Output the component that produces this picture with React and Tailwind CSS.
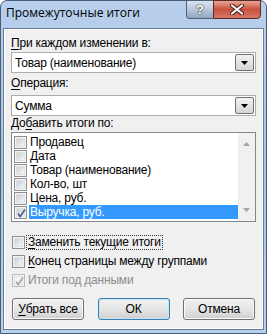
import React from "react";

const F = { fontFamily: "'Liberation Sans', Arial, sans-serif" };

function U({ children }) {
  return <span className="underline underline-offset-[2px]">{children}</span>;
}

function Check({ checked, disabled }) {
  return (
    <div
      className={`relative w-[13px] h-[13px] shrink-0 border ${
        disabled ? "border-[#bcbcbc]" : "border-[#8e8f8f]"
      } bg-[#f4f4f4] flex items-center justify-center`}
    >
      <div
        className={`w-[9px] h-[9px] ${
          disabled ? "bg-[#f4f4f4]" : "bg-gradient-to-br from-[#cbcfd5] to-[#f6f6f6]"
        } border border-[#e0e0e0]`}
      />
      {checked && (
        <svg className="absolute left-[1px] top-[1px]" width="11" height="11" viewBox="0 0 11 11">
          <path
            d="M2 5.5 L4.2 8.5 L9 1.5"
            fill="none"
            stroke={disabled ? "#a8a8a8" : "#4a5f97"}
            strokeWidth="1.6"
          />
        </svg>
      )}
    </div>
  );
}

function Combo({ value }) {
  return (
    <div className="h-[21px] border border-[#abadb3] bg-white flex items-stretch">
      <div className="flex-1 pl-[3px] flex items-center text-[12px] tracking-[-0.2px] text-black leading-none">{value}</div>
      <div className="w-[19px] m-[1px] border border-[#707070] rounded-[2px] bg-gradient-to-b from-[#f2f2f2] to-[#d4d4d4] flex items-center justify-center">
        <svg width="7" height="4" viewBox="0 0 7 4">
          <path d="M0 0 H7 L3.5 4 Z" fill="#000" />
        </svg>
      </div>
    </div>
  );
}

function Btn({ children, def }) {
  return (
    <div
      className={`w-[72px] h-[22px] rounded-[3px] border ${
        def ? "border-[#3c7fb1] shadow-[inset_0_0_0_1px_#bfe6f9]" : "border-[#707070] shadow-[inset_0_0_0_1px_#fbfbfb]"
      } bg-gradient-to-b from-[#f2f2f2] via-[#e6e6e6] to-[#cfcfcf] flex items-center justify-center text-[12px] tracking-[-0.2px] text-black leading-none`}
    >
      {children}
    </div>
  );
}

export default function App() {
  const items = ["Продавец", "Дата", "Товар (наименование)", "Кол-во, шт", "Цена, руб.", "Выручка, руб."];
  return (
    <div className="w-[270px] h-[335px] bg-white overflow-hidden relative" style={F}>
      <div className="w-[267px] h-[334px] rounded-t-[7px] border border-[#4a5d78] bg-gradient-to-b from-[#b7cfec] via-[#a8c4e6] to-[#b9d1ec] flex flex-col">
        <div className="h-[27px] flex items-start justify-between shrink-0">
          <div
            className="pl-[5px] pt-[6px] text-[12px] text-black leading-none"
            style={{ fontFamily: "'Open Sans', 'Noto Sans', sans-serif" }}
          >
            Промежуточные итоги
          </div>
          <div className="flex mr-[5px] -mt-[1px]">
            <div className="w-[27px] h-[19px] rounded-bl-[4px] border border-[#4e5f79] border-r-0 bg-gradient-to-b from-[#d9e4f1] via-[#b8c8dc] to-[#93a7c2] flex items-center justify-center">
              <span className="text-[13px] font-bold text-white leading-none" style={{ textShadow: "0 0 2px #333, 0 0 1px #222" }}>?</span>
            </div>
            <div className="w-[48px] h-[19px] rounded-br-[4px] border border-[#5a2a26] bg-gradient-to-b from-[#e8a596] via-[#c9503e] to-[#d5776a] flex items-center justify-center">
              <svg width="14" height="11" viewBox="0 0 14 11">
                <path d="M2 1.5 L12 9.5 M12 1.5 L2 9.5" stroke="#3a1a18" strokeWidth="4" strokeLinecap="round" />
                <path d="M2 1.5 L12 9.5 M12 1.5 L2 9.5" stroke="#fff" strokeWidth="2.2" strokeLinecap="round" />
              </svg>
            </div>
          </div>
        </div>
        <div className="mx-[2px] h-[302px] border border-[#6b7d95] shadow-[inset_0_0_0_1px_#ffffff] bg-[#f0f0f0] flex flex-col px-[7px] pt-[8px] text-[12px] tracking-[-0.2px] text-black">
          <div className="h-[13px] leading-[13px]"><U>П</U>ри каждом изменении в:</div>
          <div className="mt-[2px]"><Combo value="Товар (наименование)" /></div>
          <div className="mt-[4px] h-[13px] leading-[13px]"><U>О</U>перация:</div>
          <div className="mt-[5px]"><Combo value="Сумма" /></div>
          <div className="mt-[1px] h-[13px] leading-[13px]">До<U>б</U>авить итоги по:</div>
          <div className="mt-[2px] h-[90px] border border-[#828790] bg-white flex">
            <div className="flex-1 flex flex-col pt-[2px] pl-[2px]">
              {items.map((t, i) => (
                <div key={t} className="h-[14px] flex items-center">
                  <Check checked={i === 5} />
                  <div className={`ml-[2px] flex-1 h-[14px] leading-[14px] pl-[1px] ${i === 5 ? "bg-[#3399ff] text-white" : ""}`}>{t}</div>
                </div>
              ))}
            </div>
            <div className="w-[17px] bg-[#f0f0f0] flex flex-col justify-between items-center py-[9px]">
              <svg width="7" height="4" viewBox="0 0 7 4"><path d="M0 4 H7 L3.5 0 Z" fill="#a3a3a3" /></svg>
              <svg width="7" height="4" viewBox="0 0 7 4"><path d="M0 0 H7 L3.5 4 Z" fill="#a3a3a3" /></svg>
            </div>
          </div>
          <div className="mt-[13px] h-[14px] flex items-center pl-[1px]">
            <Check />
            <div className="ml-[2px] px-[1px] leading-[13px] outline outline-1 outline-dotted outline-[#333]"><U>З</U>аменить текущие итоги</div>
          </div>
          <div className="mt-[5px] h-[14px] flex items-center pl-[1px]">
            <Check />
            <div className="ml-[3px] leading-[13px]"><U>К</U>онец страницы между группами</div>
          </div>
          <div className="mt-[5px] h-[14px] flex items-center pl-[1px]">
            <Check checked disabled />
            <div className="ml-[3px] leading-[13px] text-[#8d8d8d]">Итоги под данными</div>
          </div>
          <div className="mt-[11px] flex justify-between pl-[1px] pr-[1px]">
            <Btn><U>У</U>брать все</Btn>
            <Btn def>ОК</Btn>
            <Btn>Отмена</Btn>
          </div>
        </div>
      </div>
    </div>
  );
}
